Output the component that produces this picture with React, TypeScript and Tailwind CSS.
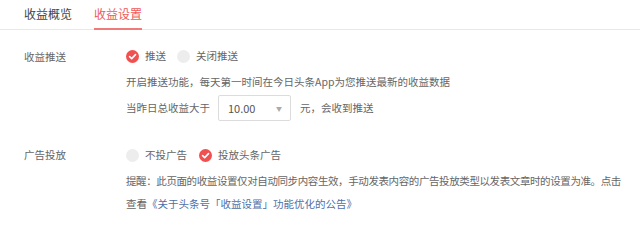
import React from "react";

const font = { fontFamily: '"Noto Sans CJK SC", "Noto Sans", sans-serif' };

function Radio({ checked }: { checked: boolean }) {
  if (checked) {
    return (
      <svg width="13" height="13" viewBox="0 0 13 13" className="shrink-0">
        <circle cx="6.5" cy="6.5" r="6.5" fill="#f0504f" />
        <path d="M3.6 6.6 L5.7 8.6 L9.5 4.6" fill="none" stroke="#fff" strokeWidth="1.6" strokeLinecap="round" strokeLinejoin="round" />
      </svg>
    );
  }
  return <span className="block w-[13px] h-[13px] rounded-full bg-[#ededed] shrink-0" />;
}

function Option({ checked, label }: { checked: boolean; label: string }) {
  return (
    <div className="flex items-center gap-[6px]">
      <Radio checked={checked} />
      <span>{label}</span>
    </div>
  );
}

export default function App() {
  return (
    <div className="w-[640px] h-[226px] bg-white overflow-hidden text-[10.5px] text-[#666]" style={font}>
      <div className="h-[30px] border-b border-[#e8e8e8] flex pl-[24px] gap-[22px]">
        <div className="h-[30px] flex items-center pb-[3px] text-[12px] text-[#444]">收益概览</div>
        <div className="h-[30px] flex items-center pb-[1px] text-[12px] text-[#ee5a5a] border-b-2 border-[#ef7a7a] -mb-px">收益设置</div>
      </div>

      <div className="grid grid-cols-[102px_1fr] pl-[24px] mt-[13px]">
        <div className="h-[26px] flex items-center pt-[2px]">收益推送</div>
        <div className="h-[26px] flex items-center gap-[11px]">
          <Option checked label="推送" />
          <Option checked={false} label="关闭推送" />
        </div>
        <div />
        <div className="h-[26px] flex items-center whitespace-nowrap">开启推送功能，每天第一时间在今日头条App为您推送最新的收益数据</div>
        <div />
        <div className="h-[26px] flex items-center whitespace-nowrap">
          <span>当昨日总收益大于</span>
          <div className="ml-[8px] w-[73px] h-[26px] border border-[#dcdcdc] rounded-[2px] flex items-center justify-between pl-[9px] pr-[8px] text-[11px] text-[#555]">
            <span>10.00</span>
            <span className="text-[6px] text-[#aaa]">▼</span>
          </div>
          <span className="ml-[9px]">元，会收到推送</span>
        </div>
      </div>

      <div className="grid grid-cols-[102px_1fr] pl-[24px] mt-[21px]">
        <div className="h-[26px] flex items-center">广告投放</div>
        <div className="h-[26px] flex items-center gap-[12px]">
          <Option checked={false} label="不投广告" />
          <Option checked label="投放头条广告" />
        </div>
        <div />
        <div className="leading-[22.5px] mt-[2px] whitespace-nowrap">
          <div className="tracking-[-0.4px]">提醒：此页面的收益设置仅对自动同步内容生效，手动发表内容的广告投放类型以发表文章时的设置为准。点击</div>
          <div>
            查看<span className="text-[#4f6fa6]">《关于头条号「收益设置」功能优化的公告》</span>
          </div>
        </div>
      </div>
    </div>
  );
}
